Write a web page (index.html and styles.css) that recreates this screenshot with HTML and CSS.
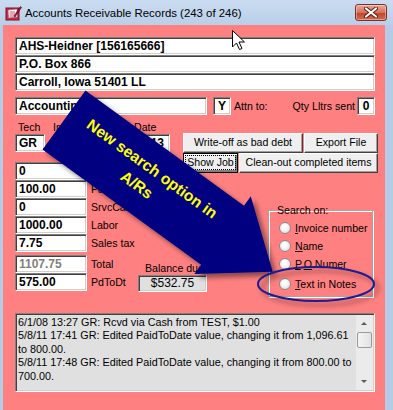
FILE: index.html
```html
<!DOCTYPE html>
<html>
<head>
  <meta charset="utf-8">
  <title>Accounts Receivable Records</title>
<link rel="stylesheet" href="styles.css">
</head>
<body>

<div class="window">
  <div class="titlebar">
    <svg class="appicon" width="17" height="16" viewBox="0 0 17 16">
      <rect x="1" y="3" width="13" height="12" fill="#d8264a" stroke="#7a1020"/>
      <path d="M3 5 L12 4 L12.5 12 L3.5 13 Z" fill="#fff" stroke="#6a6a6a" stroke-width="0.6"/>
      <path d="M4.5 7 H10 M4.5 9 H10 M4.5 11 H9" stroke="#c02040" stroke-width="0.8"/>
      <path d="M9 11 L15.5 1.5 L16.5 2.5 L10 12 Z" fill="#b8123a" stroke="#4a0010" stroke-width="0.6"/>
    </svg>
    <span class="title">Accounts Receivable Records (243 of 246)</span>
    <div class="closebtn">
      <svg width="14" height="11" viewBox="0 0 14 11">
        <path d="M2 1.5 L12 9.5 M12 1.5 L2 9.5" stroke="#5a1a12" stroke-width="4" stroke-linecap="round"/>
        <path d="M2 1.5 L12 9.5 M12 1.5 L2 9.5" stroke="#fff" stroke-width="2.2" stroke-linecap="round"/>
      </svg>
    </div>
  </div>

  <div class="client">
    <div class="addr">
      <div class="fld bold">AHS-Heidner [156165666]</div>
      <div class="fld bold">P.O. Box 866</div>
      <div class="fld bold">Carroll, Iowa 51401 LL</div>
    </div>

    <div class="row2">
      <div class="fld bold acct">Accounting</div>
      <div class="fld bold tiny">Y</div>
      <span class="lbl attn">Attn to:</span>
      <span class="lbl qty">Qty Lltrs sent</span>
      <div class="fld bold tiny">0</div>
    </div>

    <div class="row3">
      <div class="col tech">
        <span class="lbl">Tech</span>
        <div class="fld bold">GR</div>
      </div>
      <div class="col invno">
        <span class="lbl">Invoice #</span>
        <div class="fld bold">3391</div>
      </div>
      <div class="col invdate">
        <span class="lbl">Inv Date</span>
        <div class="fld bold">4/29/13</div>
      </div>
      <div class="btns">
        <div class="btnrow">
          <div class="btn writeoff">Write-off as bad debt</div>
          <div class="btn export">Export File</div>
        </div>
        <div class="btnrow">
          <div class="btn showjob"><span class="focus">Show Job</span></div>
          <div class="btn clean">Clean-out completed items</div>
        </div>
      </div>
    </div>

    <div class="row4">
      <div class="amounts">
        <div class="amt"><div class="fld bold">0</div><span class="lbl">Misc</span></div>
        <div class="amt"><div class="fld bold">100.00</div><span class="lbl">Parts</span></div>
        <div class="amt"><div class="fld bold">0</div><span class="lbl">SrvcCall</span></div>
        <div class="amt"><div class="fld bold">1000.00</div><span class="lbl">Labor</span></div>
        <div class="amt"><div class="fld bold">7.75</div><span class="lbl">Sales tax</span></div>
        <div class="amt total"><div class="fld bold grey">1107.75</div><span class="lbl">Total</span></div>
        <div class="amt"><div class="fld bold">575.00</div><span class="lbl">PdToDt</span></div>
      </div>

      <div class="balance">
        <span class="lbl">Balance due</span>
        <div class="fld balbox">$532.75</div>
      </div>

      <fieldset class="search">
        <legend>Search on:</legend>
        <div class="opt"><span class="radio"></span><span class="lbl"><u>I</u>nvoice number</span></div>
        <div class="opt"><span class="radio"></span><span class="lbl"><u>N</u>ame</span></div>
        <div class="opt"><span class="radio"></span><span class="lbl"><u>P</u>.<u>O</u> Numer</span></div>
        <div class="opt last"><span class="radio"></span><span class="lbl"><u>T</u>ext in Notes</span></div>
      </fieldset>
    </div>

    <div class="notes">
      <div class="notes-text">
        6/1/08 13:27 GR: Rcvd via Cash from TEST, $1.00<br>
        5/8/11 17:41 GR: Edited PaidToDate value, changing it from 1,096.61<br>
        to 800.00.<br>
        5/8/11 17:48 GR: Edited PaidToDate value, changing it from 800.00 to<br>
        700.00.
      </div>
      <div class="vscroll">
        <div class="arrow up"></div>
        <div class="thumb"></div>
        <div class="track"></div>
        <div class="arrow down"></div>
      </div>
    </div>
  </div>
</div>

<svg class="overlay" width="393" height="410" viewBox="0 0 393 410">
  <defs>
    <filter id="shadow" x="-20%" y="-20%" width="150%" height="150%">
      <feGaussianBlur in="SourceAlpha" stdDeviation="2.5"/>
      <feOffset dx="4" dy="4" result="blur"/>
      <feComponentTransfer><feFuncA type="linear" slope="0.45"/></feComponentTransfer>
      <feMerge><feMergeNode/><feMergeNode in="SourceGraphic"/></feMerge>
    </filter>
  </defs>
  <g filter="url(#shadow)">
    <g transform="translate(64 120) rotate(36)">
      <polygon points="0,-36.5 196,-36.5 196,-48 258,0 196,48 196,36.5 0,36.5" fill="#000080"/>
    </g>
  </g>
  <g transform="translate(64 120) rotate(36)">
    <text class="callout" x="100" y="-7" text-anchor="middle">New search option in</text>
    <text class="callout" x="97" y="15" text-anchor="middle">A/Rs</text>
  </g>
  <g filter="url(#shadow)">
    <ellipse cx="316" cy="284" rx="58" ry="17" fill="none" stroke="#1b1b8f" stroke-width="2"/>
  </g>
  <path d="M232.5 30.5 V47 L236.5 43 L239.5 49.5 L242 48.5 L239 42 H244.5 Z" fill="#fff" stroke="#000" stroke-width="1" stroke-linejoin="round"/>
</svg>

</body>
</html>
```

FILE: styles.css
```css
body {
  margin: 0;
  width: 393px;
  height: 410px;
  overflow: hidden;
  position: relative;
  background: #b6cce6;
  font-family: "Liberation Sans", Arial, sans-serif;
  font-size: 10.6px;
  color: #000;
}

.window {
  display: flex;
  flex-direction: column;
  height: 410px;
}

/* title bar */
.titlebar {
  height: 25px;
  flex: none;
  display: flex;
  align-items: center;
  padding: 0 6px 0 5px;
  background: linear-gradient(#cadcf0, #b9cfe8);
}
.appicon {
  flex: none;
}
.title {
  flex: 1;
  margin-left: 3px;
  font-size: 11.4px;
  color: #000;
}
.closebtn {
  width: 30px;
  height: 15px;
  border: 1px solid #7b3326;
  border-radius: 3px;
  background: linear-gradient(#e9a99b, #d5715d 50%, #c0432b 51%, #d46a4e);
  box-shadow: inset 0 0 0 1px rgba(255,255,255,0.35);
  display: flex;
  align-items: center;
  justify-content: center;
}

/* client area */
.client {
  flex: 1;
  margin: 0 8px 0 3px;
  padding: 12px 10px 0 12px;
  background: #ff8080;
}

.lbl {
  line-height: 13px;
  white-space: nowrap;
}

.fld {
  box-sizing: border-box;
  height: 18px;
  padding: 0 3px;
  background: #fff;
  border: 1px solid;
  border-color: #808080 #fff #fff #808080;
  box-shadow: inset 1px 1px 0 #404040, inset -1px -1px 0 #d4d0c8;
  line-height: 17px;
  white-space: nowrap;
  overflow: hidden;
}
.bold {
  font-weight: bold;
  font-size: 12px;
}
.grey {
  color: #808080;
}

/* rows */
.row2 {
  display: flex;
  align-items: center;
  margin-top: 6px;
}
.acct {
  width: 192px;
}
.tiny {
  width: 18px;
  padding: 0;
  text-align: center;
}
.row2 .tiny:nth-child(2) {
  margin-left: 6px;
}
.attn {
  margin-left: 3px;
}
.qty {
  margin-left: auto;
  margin-right: 2px;
}

.row3 {
  display: flex;
  height: 42px;
  margin-top: 5px;
}
.col {
  display: flex;
  flex-direction: column;
}
.col .lbl {
  line-height: 14px;
}
.tech {
  width: 30px;
}
.tech .lbl {
  padding-left: 3px;
}
.invno {
  width: 60px;
  margin-left: 8px;
}
.invdate {
  width: 50px;
  margin-left: 7px;
}
.invdate .lbl {
  margin-left: -3px;
}

.btns {
  margin-left: auto;
  margin-right: -3px;
  margin-top: 13px;
  width: 195px;
}
.btnrow {
  display: flex;
}
.btn {
  box-sizing: border-box;
  height: 20px;
  background: #efefef;
  border: 1px solid;
  border-color: #fff #404040 #404040 #fff;
  box-shadow: inset -1px -1px 0 #a0a0a0;
  text-align: center;
  line-height: 17px;
  white-space: nowrap;
}
.writeoff { width: 120px; }
.export { width: 74px; margin-left: 1px; }
.showjob {
  width: 55px;
  border-color: #000;
  box-shadow: inset 1px 1px 0 #fff, inset -2px -2px 0 #808080;
}
.focus {
  display: inline-block;
  line-height: 13px;
  padding: 0 1px;
  margin-top: 2px;
  outline: 1px dotted #000;
}
.clean { width: 139px; margin-left: 1px; }

.row4 {
  display: flex;
  align-items: flex-start;
}
.amounts {
  width: 120px;
}
.amt {
  display: flex;
  align-items: center;
}
.amt .fld {
  width: 72px;
}
.amt .lbl {
  margin-left: 4px;
}
.amt.total {
  margin-top: 3px;
}

.balance {
  margin-left: 3px;
  margin-top: 100px;
  width: 69px;
  display: flex;
  flex-direction: column;
}
.balance .lbl {
  padding-left: 7px;
}
.balbox {
  height: 17px;
  background: #e0e0e0;
  font-size: 12px;
  text-align: center;
  line-height: 15px;
}

.search {
  margin: 41px 2px 0 auto;
  width: 105px;
  box-sizing: border-box;
  padding: 2px 0 3px 10px;
  border: 1px solid #a4a4a4;
  box-shadow: inset 1px 1px 0 #fff, 1px 1px 0 #fff;
  min-width: 0;
}
.search legend {
  margin-left: -4px;
  padding: 0 2px;
  line-height: 14px;
}
.opt {
  display: flex;
  align-items: center;
  height: 18px;
}
.opt.last {
  margin-top: 2px;
}
.radio {
  box-sizing: border-box;
  width: 12px;
  height: 12px;
  border-radius: 50%;
  border: 1px solid #8a8a8a;
  background: radial-gradient(circle at 45% 40%, #fff 20%, #e2e2e2 70%, #cfcfcf);
  margin-right: 4px;
  flex: none;
}

/* notes */
.notes {
  display: flex;
  margin-top: 16px;
  height: 79px;
  box-sizing: border-box;
  border: 1px solid;
  border-color: #808080 #fff #fff #808080;
  box-shadow: inset 1px 1px 0 #404040, inset -1px -1px 0 #d4d0c8;
  background: #e0e0e0;
}
.notes-text {
  flex: 1;
  padding: 2px 0 0 2px;
  font-size: 10.8px;
  line-height: 13.4px;
  white-space: nowrap;
  overflow: hidden;
}
.vscroll {
  width: 17px;
  margin: 1px 1px 1px 0;
  background: #ebebeb;
  display: flex;
  flex-direction: column;
}
.arrow {
  height: 17px;
  position: relative;
}
.arrow::after {
  content: "";
  position: absolute;
  left: 5px;
  top: 7px;
  border-left: 3px solid transparent;
  border-right: 3px solid transparent;
}
.arrow.up::after {
  border-bottom: 3px solid #5a5a5a;
}
.arrow.down::after {
  border-top: 3px solid #5a5a5a;
}
.thumb {
  height: 16px;
  margin: 0 1px;
  box-sizing: border-box;
  border: 1px solid #9a9a9a;
  border-radius: 2px;
  background: linear-gradient(90deg, #f4f4f4, #e2e2e2);
}
.track {
  flex: 1;
}

/* callout drawn over the form */
.overlay {
  position: absolute;
  left: 0;
  top: 0;
  pointer-events: none;
}
.callout {
  font-family: "Liberation Sans", Arial, sans-serif;
  font-weight: bold;
  font-size: 15.6px;
  fill: #ffff00;
}
```
